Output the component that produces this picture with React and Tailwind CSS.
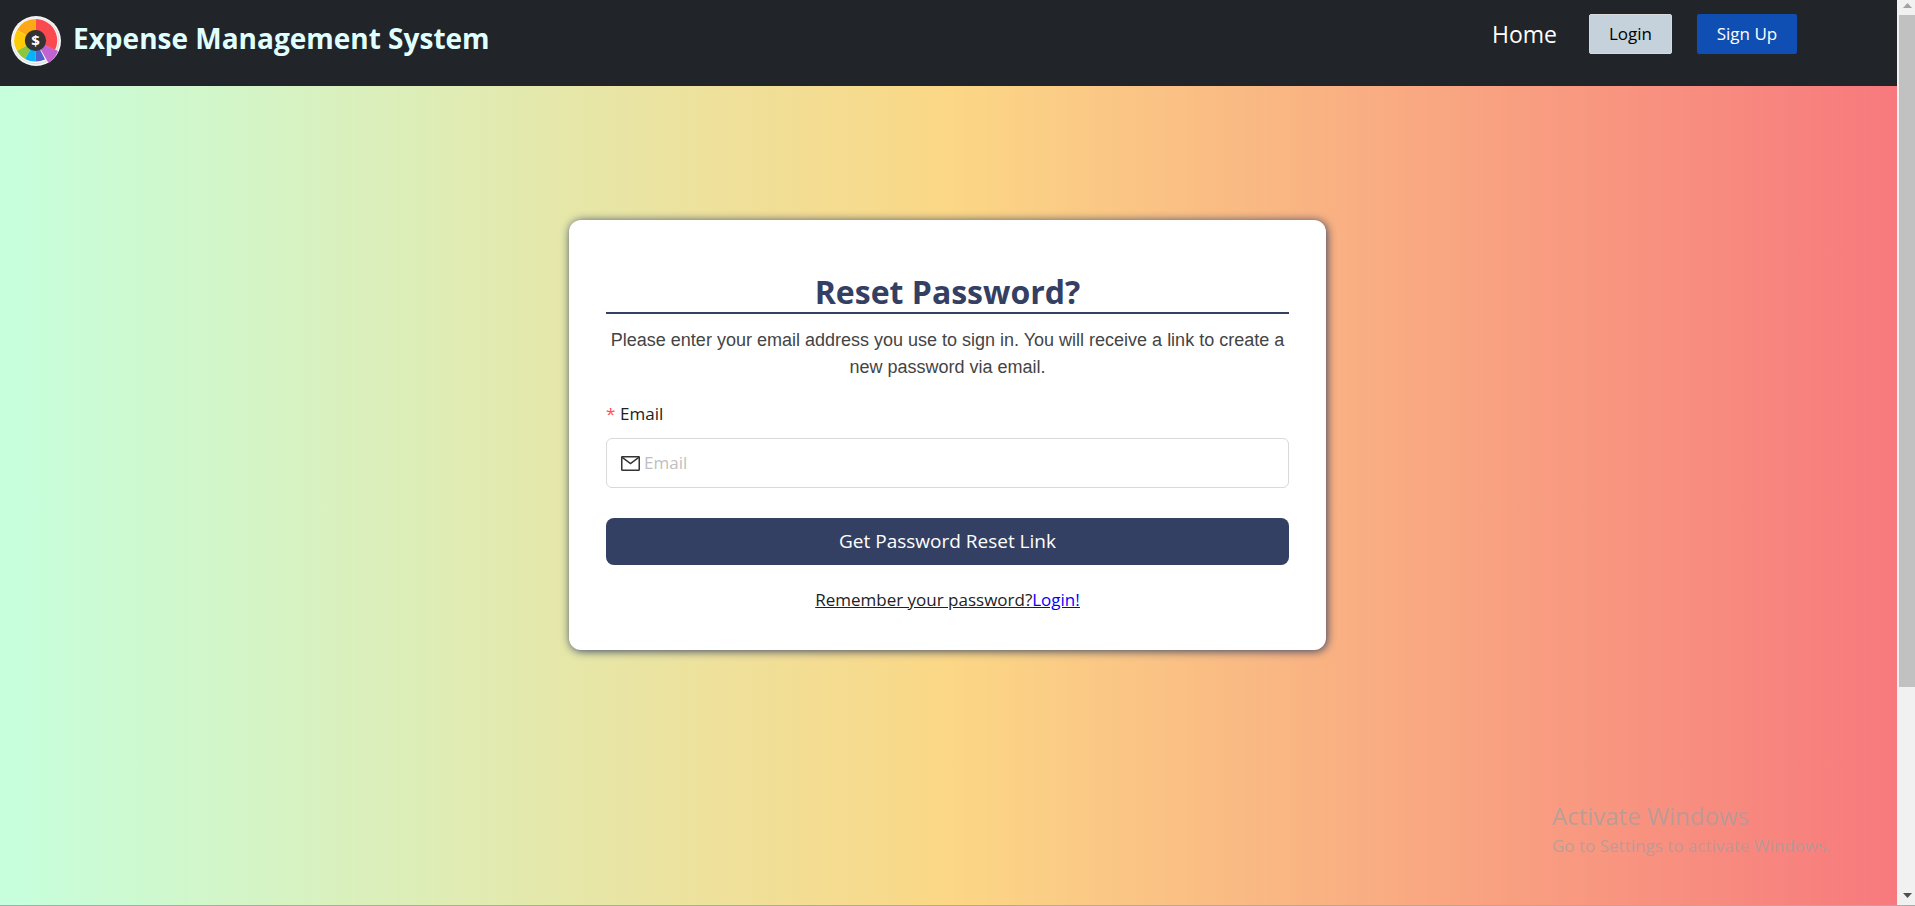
import React from "react";

function Logo() {
  return (
    <svg viewBox="0 0 50 50" className="size-[50px] shrink-0" aria-hidden="true">
      <circle cx="25" cy="25" r="25" fill="#f6f6f6" />
      <circle cx="25" cy="25" r="23.4" fill="#dcdcdc" />
      <circle cx="24.6" cy="24.6" r="22.6" fill="#f8f8f8" />
      <path d="M24.500 24.500V3A21.500 21.500 0 0 1 44 34Z" fill="#fb4a4f" />
      <path d="M24.500 24.500L6 14A21.500 21.500 0 0 1 24.500 3Z" fill="#fea817" />
      <path d="M24.500 24.500L6 35A21.500 21.500 0 0 1 6 14Z" fill="#fdcb08" />
      <path d="M24.500 24.500L14 43A21.500 21.500 0 0 1 6 35Z" fill="#8cc63c" />
      <path d="M24.500 24.500V45.500A21 21 0 0 1 14 43Z" fill="#06b3f8" />
      <path d="M24.500 24.500L34 43.500A21 21 0 0 1 24.500 45.500Z" fill="#4f62cc" />
      <path d="M24.500 24.500L47 35Q44 42.500 37.500 47Z" fill="#c263d2" />
      <circle cx="24.500" cy="24.500" r="10.6" fill="#333" />
      <text x="24.500" y="30" textAnchor="middle" fontFamily="Open Sans, sans-serif" fontWeight="700" fontSize="15" fill="#fff">$</text>
    </svg>
  );
}

function MailIcon() {
  return (
    <svg viewBox="0 0 19 15" className="h-[15px] w-[19px] shrink-0" fill="none" stroke="#333" aria-hidden="true">
      <rect x="0.75" y="0.75" width="17.5" height="13.5" rx="0.4" strokeWidth="1.5" />
      <path d="M1.2 1.3L9.5 7.6L17.8 1.3" strokeWidth="1.5" />
    </svg>
  );
}

function Header() {
  return (
    <header className="flex h-[86px] shrink-0 items-start justify-between bg-[#212529] pr-[100px] pl-[11px]">
      <a href="#" className="flex items-center gap-3 pt-4">
        <Logo />
        <span className="pb-1.5 text-[28px] font-bold whitespace-nowrap text-[#e0ffff]">Expense Management System</span>
      </a>
      <nav className="flex items-center pt-[14px]">
        <a href="#" className="mr-8 text-[23px] leading-8 text-white">Home</a>
        <button type="button" className="mr-[25px] h-10 w-[83px] rounded-xs border border-[#d9d9d9] bg-[#c5d2dc] text-[17px] leading-6 text-black">Login</button>
        <button type="button" className="h-10 w-[100px] rounded-xs bg-[#0f4fb3] text-[17px] leading-6 text-white">Sign Up</button>
      </nav>
    </header>
  );
}

function ResetCard() {
  return (
    <form className="flex h-fit w-full max-w-[757px] flex-col rounded-xl bg-white px-[37px] pt-[50px] pb-9 shadow-[1px_1px_10px_#344063]">
      <h1 className="border-b-2 border-[#344063] pt-0.5 text-center text-[32px] leading-10 font-bold text-[#344063]">Reset Password?</h1>
      <p className="mt-[13px] text-center font-['Liberation_Sans',Arial,sans-serif] text-lg leading-[27px] text-[#444]">
        Please enter your email address you use to sign in. You will receive a link to create a new password via email.
      </p>
      <label htmlFor="email" className="mt-[17px] flex gap-1 text-[17px] leading-8 text-[#222]">
        <span className="w-[10px] text-[#ff4d4f]">*</span>Email
      </label>
      <div className="mt-2 flex h-[50px] items-center gap-1 rounded-md border border-[#d9d9d9] px-[14px]">
        <MailIcon />
        <input id="email" type="email" placeholder="Email" className="min-w-0 flex-1 text-[17px] text-[#222] outline-none placeholder:text-[#bfbfbf]" />
      </div>
      <button type="submit" className="mt-[30px] h-[47px] rounded-lg bg-[#344063] text-[19px] text-white">Get Password Reset Link</button>
      <p className="mt-[21px] text-center text-[17px] leading-7 text-[#222] underline">
        Remember your password?<a href="#" className="text-[#0000ff]">Login!</a>
      </p>
    </form>
  );
}

function Scrollbar() {
  return (
    <div className="flex w-[18px] shrink-0 flex-col items-center justify-between bg-[#f1f1f1] pl-[2px]" aria-hidden="true">
      <svg viewBox="0 0 16 15" className="h-[15px] w-4"><path d="M4 8L8.500 3L13 8Z" fill="#a3a3a3" /></svg>
      <div className="w-full flex-1"><div className="h-[77%] bg-[#c1c1c1]" /></div>
      <svg viewBox="0 0 16 17" className="h-[17px] w-4"><path d="M4 5H13L8.500 10Z" fill="#505050" /></svg>
    </div>
  );
}

export default function App() {
  return (
    <div className="flex min-h-screen border-b border-[#ababab] font-['Open_Sans','Noto_Sans',sans-serif]">
      <div className="flex min-w-0 flex-1 flex-col">
        <Header />
        <main className="relative flex flex-1 justify-center bg-[linear-gradient(to_right,#c6ffdd,#fbd786,#f7797d)] pt-[134px] pr-[18px] pb-16 pl-4">
          <ResetCard />
          <div className="pointer-events-none absolute right-[60px] bottom-[45px] w-[285px] whitespace-nowrap text-[#a0a0a0]/70">
            <p className="text-2xl leading-8">Activate Windows</p>
            <p className="text-[17px] leading-7">Go to Settings to activate Windows.</p>
          </div>
        </main>
      </div>
      <Scrollbar />
    </div>
  );
}
